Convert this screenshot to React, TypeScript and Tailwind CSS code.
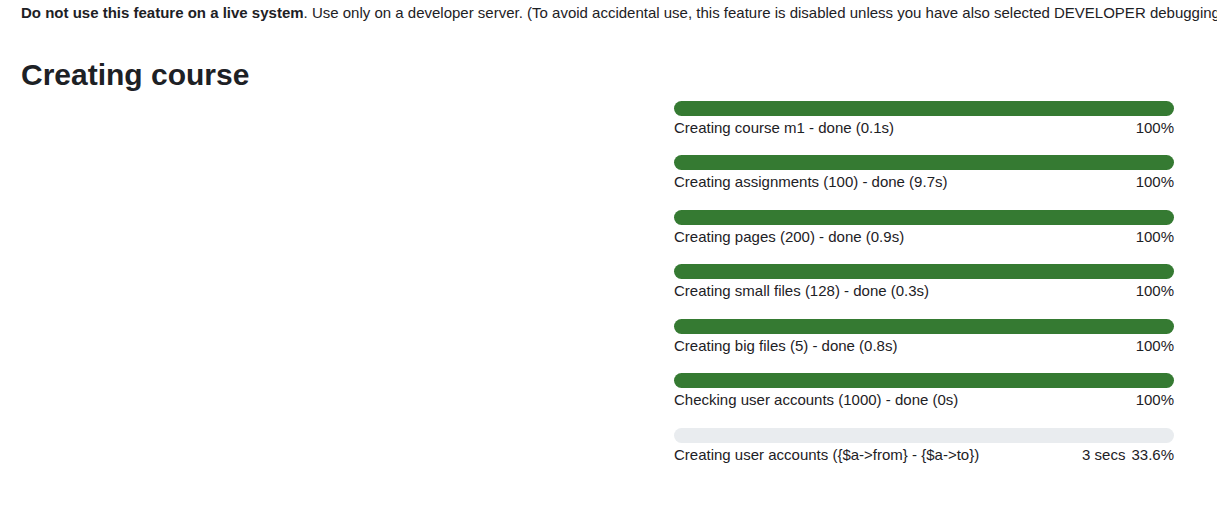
import React from "react";

const items = [
  { label: "Creating course m1 - done (0.1s)", pct: "100%", done: true },
  { label: "Creating assignments (100) - done (9.7s)", pct: "100%", done: true },
  { label: "Creating pages (200) - done (0.9s)", pct: "100%", done: true },
  { label: "Creating small files (128) - done (0.3s)", pct: "100%", done: true },
  { label: "Creating big files (5) - done (0.8s)", pct: "100%", done: true },
  { label: "Checking user accounts (1000) - done (0s)", pct: "100%", done: true },
  { label: "Creating user accounts ({$a->from} - {$a->to})", pct: "33.6%", done: false, time: "3 secs" },
];

export default function App() {
  return (
    <div
      className="min-h-[525px] bg-white text-[#1d2125] text-[15px] leading-[22.5px]"
      style={{ fontFamily: '"Liberation Sans", Arial, sans-serif' }}
    >
      <div className="pl-[21px] pt-[2px]">
        <p className="whitespace-nowrap overflow-hidden">
          <strong className="font-bold">Do not use this feature on a live system</strong>. Use only on a developer
          server. (To avoid accidental use, this feature is disabled unless you have also selected DEVELOPER debugging
          level.)
        </p>
        <h2 className="mt-[32px] text-[30px] leading-[36px] font-bold">Creating course</h2>
      </div>
      <div className="flex justify-end pr-[43px] mt-[8px]">
        <div className="w-[500px] flex flex-col">
          {items.map((it, i) => (
            <div key={i} className="mb-[16px]">
              <div className={`h-[15px] rounded-full ${it.done ? "bg-[#357a32]" : "bg-[#e9ecef]"}`} />
              <div className="flex justify-between mt-[1px]">
                <span>{it.label}</span>
                <span className="flex gap-[6px]">
                  {it.time && <span>{it.time}</span>}
                  <span>{it.pct}</span>
                </span>
              </div>
            </div>
          ))}
        </div>
      </div>
    </div>
  );
}
